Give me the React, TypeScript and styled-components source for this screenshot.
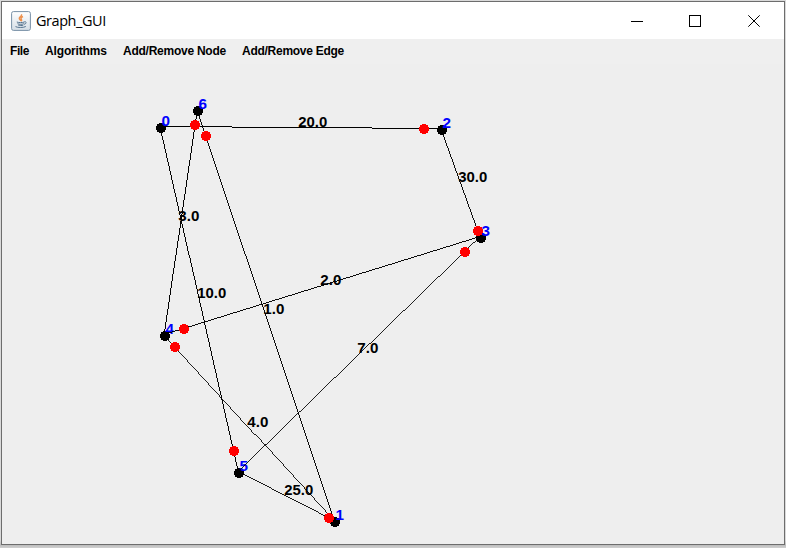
import React from "react";
import styled, { createGlobalStyle } from "styled-components";

const GlobalStyle = createGlobalStyle`
  html, body { margin: 0; padding: 0; overflow: hidden; background: #d4d4d4; }
  * { box-sizing: border-box; }
`;

const Desktop = styled.div`
  width: 786px;
  height: 548px;
  padding: 1px 1px 3px 1px;
  background: linear-gradient(#d9d9d9 0, #d9d9d9 540px, #bcbcbc 545px, #d0d0d0 548px);
`;

const Frame = styled.main`
  width: 784px;
  height: 544px;
  display: flex;
  flex-direction: column;
  border: 1px solid #6d6d6d;
  background: #eeeeee;
`;

const TitleBar = styled.header`
  height: 37px;
  flex: none;
  display: flex;
  align-items: center;
  background: #ffffff;
`;

const AppIcon = styled.svg`
  width: 20px;
  height: 20px;
  margin: 0 5px 0 9px;
`;

const Title = styled.h1`
  flex: 1;
  margin: 0;
  font: 400 14.5px/20px "Open Sans", "Noto Sans", sans-serif;
  letter-spacing: -0.45px;
  color: #000;
`;

const WindowButton = styled.button`
  width: 58px;
  height: 37px;
  display: grid;
  place-items: center;
  padding: 0;
  border: 0;
  background: transparent;

  &:last-child { width: 60px; }
`;

const WindowControls = styled.div`
  display: flex;
  width: 176px;
`;

const ControlGlyph = styled.svg`
  width: 12px;
  height: 12px;
  fill: none;
  stroke: #000;
`;

const MenuBar = styled.nav`
  height: 25px;
  flex: none;
  display: flex;
  gap: 16px;
  padding-left: 8px;
  background: #efefef;
`;

const MenuItem = styled.span<{ $width: number; $tracking: number }>`
  width: ${({ $width }) => $width}px;
  letter-spacing: ${({ $tracking }) => $tracking}px;
  white-space: nowrap;
  font: 700 12px/25px "Liberation Sans", Arial, sans-serif;
  color: #000;
`;

const Canvas = styled.svg`
  display: block;
  width: 782px;
  height: 480px;
  background: #eeeeee;
`;

const EdgeLine = styled.line`
  stroke: #000;
  shape-rendering: crispEdges;
`;

const Dot = styled.circle<{ $color: string }>`
  fill: ${({ $color }) => $color};
  shape-rendering: crispEdges;
`;

const Label = styled.text<{ $color: string }>`
  fill: ${({ $color }) => $color};
  font: 700 14px "Liberation Sans", Arial, sans-serif;
`;

const menus = [
  { name: "File", width: 19, tracking: -0.4 },
  { name: "Algorithms", width: 62, tracking: -0.15 },
  { name: "Add/Remove Node", width: 103, tracking: -0.25 },
  { name: "Add/Remove Edge", width: 103, tracking: -0.27 },
];

const nodes = [
  { id: 0, x: 161, y: 128 },
  { id: 1, x: 335, y: 522 },
  { id: 2, x: 442, y: 130 },
  { id: 3, x: 481, y: 238 },
  { id: 4, x: 165, y: 336 },
  { id: 5, x: 239, y: 473 },
  { id: 6, x: 198, y: 111 },
];

const edges = [
  { a: 0, b: 2, weight: "20.0", x: 298, y: 127 },
  { a: 2, b: 3, weight: "30.0", x: 458, y: 182 },
  { a: 6, b: 4, weight: "3.0", x: 178, y: 221 },
  { a: 0, b: 5, weight: "10.0", x: 197, y: 298 },
  { a: 6, b: 1, weight: "1.0", x: 263, y: 314 },
  { a: 3, b: 4, weight: "2.0", x: 320, y: 285 },
  { a: 3, b: 5, weight: "7.0", x: 357, y: 353 },
  { a: 4, b: 1, weight: "4.0", x: 247, y: 427 },
  { a: 5, b: 1, weight: "25.0", x: 284, y: 495 },
];

const arrows = [
  [424, 129], [195, 125], [206, 136], [478, 231], [465, 252],
  [184, 329], [175, 347], [234, 451], [329, 518],
];

// Narrows slanted strokes a little so diagonals keep the weight of upright lines.
function hairline(a: { x: number; y: number }, b: { x: number; y: number }) {
  const dx = Math.abs(a.x - b.x);
  const dy = Math.abs(a.y - b.y);
  return Math.max(0.87, Math.max(dx, dy) / Math.hypot(dx, dy));
}

function JavaIcon() {
  return (
    <AppIcon viewBox="0 0 20 20" aria-hidden="true">
      <defs>
        <linearGradient id="tile" x2="0" y2="1">
          <stop stopColor="#fff" />
          <stop offset="1" stopColor="#d5dee6" />
        </linearGradient>
      </defs>
      <rect x=".6" y=".6" width="18.8" height="18.8" rx="1.8" fill="url(#tile)" stroke="#7890a6" />
      <path d="M10.500 3.200c1 2-2.500 2.600-2.200 4.300.2 1 1.300 1.500 1.500 2.500M12 5.500c-2 1-2.500 1.800-1.500 3 .5.8 0 1.300-.4 1.700" fill="none" stroke="#ed914d" strokeWidth="1.400" />
      <path d="M5.800 11c2 .8 5.500.8 7.500 0M6.500 12.700c1.800.8 4.500.8 6.300 0M7.300 14.200c1.500.5 3.500.5 5 0M13.300 10.800c2.500-.5 2.500 1.900-.2 2.500M4.500 15.600c2 1.200 8 1.200 10.300-.1" fill="none" stroke="#55738e" strokeWidth="1" />
    </AppIcon>
  );
}

export default function App() {
  return (
    <>
      <GlobalStyle />
      <Desktop>
        <Frame>
          <TitleBar>
            <JavaIcon />
            <Title>Graph_GUI</Title>
            <WindowControls>
              <WindowButton aria-label="Minimize">
                <ControlGlyph viewBox="0 0 12 12"><path d="M0 6.500h12" shapeRendering="crispEdges" /></ControlGlyph>
              </WindowButton>
              <WindowButton aria-label="Maximize">
                <ControlGlyph viewBox="0 0 12 12"><path d="M.5.5h11v11H.5z" shapeRendering="crispEdges" /></ControlGlyph>
              </WindowButton>
              <WindowButton aria-label="Close">
                <ControlGlyph viewBox="0 0 12 12"><path d="M.3.3l11.400 11.400M11.700.3L.3 11.700" /></ControlGlyph>
              </WindowButton>
            </WindowControls>
          </TitleBar>
          <MenuBar>
            {menus.map((m) => (
              <MenuItem key={m.name} $width={m.width} $tracking={m.tracking}>{m.name}</MenuItem>
            ))}
          </MenuBar>
          <Canvas viewBox="2 64 782 480">
            {nodes.map((n) => (
              <g key={n.id}>
                <Dot cx={n.x} cy={n.y} r={5} $color="#000" />
                <Label
                  x={n.x + 0.5}
                  y={n.y - 2}
                  textLength={8.5}
                  lengthAdjust="spacingAndGlyphs"
                  $color="#0000ff"
                >
                  {n.id}
                </Label>
              </g>
            ))}
            {edges.map((e) => (
              <g key={e.weight}>
                <EdgeLine
                  x1={nodes[e.a].x - 0.8}
                  y1={nodes[e.a].y - 1.5}
                  x2={nodes[e.b].x - 0.8}
                  y2={nodes[e.b].y - 1.5}
                  strokeWidth={hairline(nodes[e.a], nodes[e.b])}
                />
                <Label
                  x={e.x + 0.3}
                  y={e.y}
                  textLength={e.weight.length === 4 ? 29 : 21}
                  lengthAdjust="spacingAndGlyphs"
                  $color="#000"
                >
                  {e.weight}
                </Label>
              </g>
            ))}
            {arrows.map(([x, y]) => <Dot key={`${x}-${y}`} cx={x} cy={y} r={5} $color="#ff0000" />)}
          </Canvas>
        </Frame>
      </Desktop>
    </>
  );
}
